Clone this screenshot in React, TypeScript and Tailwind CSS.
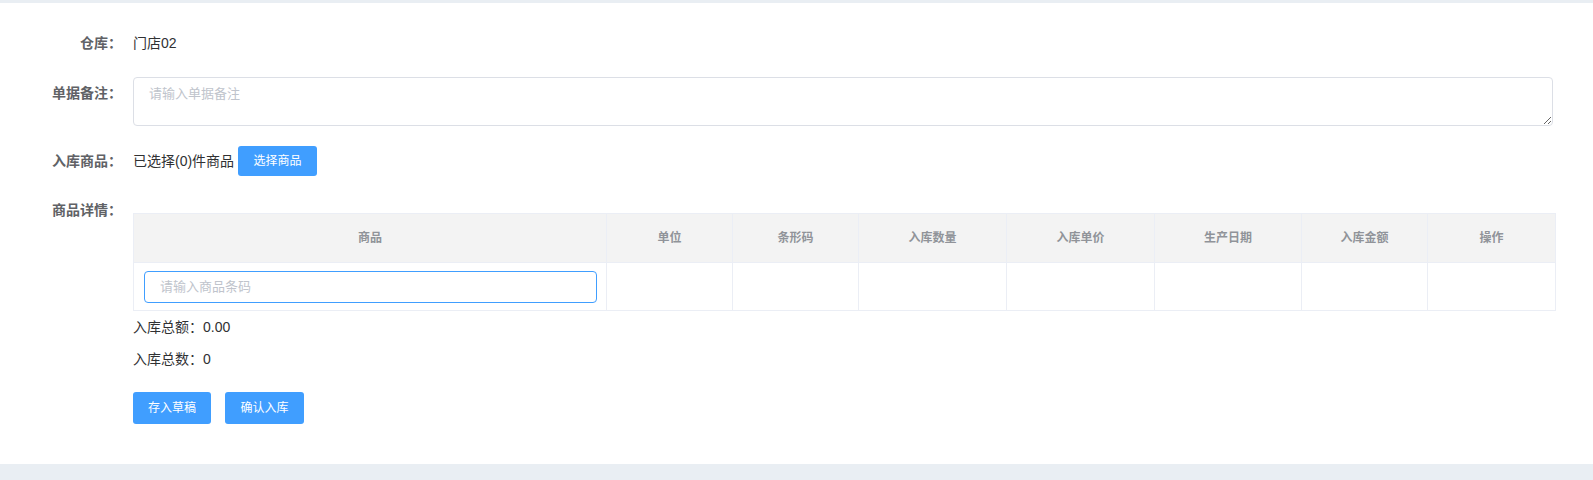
import React from 'react';

const columns = [
  { title: '商品', width: 'w-[473px]' },
  { title: '单位', width: 'w-[126px]' },
  { title: '条形码', width: 'w-[126px]' },
  { title: '入库数量', width: 'w-[148px]' },
  { title: '入库单价', width: 'w-[148px]' },
  { title: '生产日期', width: 'w-[147px]' },
  { title: '入库金额', width: 'w-[126px]' },
  { title: '操作', width: 'w-[128px]' },
];

function Label({ children, className = '' }: { children: React.ReactNode; className?: string }) {
  return (
    <div className={`w-[133px] shrink-0 pr-[11px] text-right text-[14px] font-bold text-[#606266] ${className}`}>
      {children}
    </div>
  );
}

export default function App() {
  return (
    <div
      className="flex h-[480px] w-full flex-col bg-[#e9eef3] pt-[3px]"
      style={{ fontFamily: '"Liberation Sans", "Noto Sans CJK SC", sans-serif' }}
    >
      <div className="h-[461px] bg-white pt-[20px] pr-[38px]">
        {/* 仓库 */}
        <div className="flex h-[40px] items-center">
          <Label>仓库：</Label>
          <span className="text-[14px] text-[#303133]">门店02</span>
        </div>

        {/* 单据备注 */}
        <div className="mt-[14px] flex items-start">
          <Label className="leading-[32px]">单据备注：</Label>
          <textarea
            placeholder="请输入单据备注"
            className="h-[49px] flex-1 mr-[2px] resize-y rounded-[4px] border border-[#dcdfe6] px-[15px] py-[5px] text-[13px] leading-[21px] text-[#606266] placeholder:text-[#c0c4cc] focus:outline-none"
          />
        </div>

        {/* 入库商品 */}
        <div className="mt-[20px] flex h-[30px] items-center">
          <Label>入库商品：</Label>
          <span className="text-[14px] text-[#303133]">已选择(0)件商品</span>
          <button className="ml-[4px] h-[30px] w-[79px] rounded-[3px] bg-[#409eff] text-[12px] text-white">
            选择商品
          </button>
        </div>

        {/* 商品详情 */}
        <div className="mt-[24px] flex items-start">
          <Label className="leading-[20px]">商品详情：</Label>
          <div className="flex-1">
            <table className="mt-[13px] w-full table-fixed border-collapse border border-[#ebeef5]">
              <thead>
                <tr className="h-[49px] bg-[#f3f3f3]">
                  {columns.map((c) => (
                    <th
                      key={c.title}
                      className={`${c.width} border border-[#ebeef5] text-center text-[12px] font-bold text-[#909399]`}
                    >
                      {c.title}
                    </th>
                  ))}
                </tr>
              </thead>
              <tbody>
                <tr className="h-[48px]">
                  <td className="border border-[#ebeef5] pl-[10px] pr-[9px]">
                    <input
                      placeholder="请输入商品条码"
                      className="h-[32px] w-full rounded-[4px] border border-[#409eff] px-[15px] text-[13px] text-[#606266] placeholder:text-[#c0c4cc] focus:outline-none"
                    />
                  </td>
                  {columns.slice(1).map((c) => (
                    <td key={c.title} className="border border-[#ebeef5]" />
                  ))}
                </tr>
              </tbody>
            </table>

            <div className="flex h-[32px] items-center text-[14px] text-[#303133]">入库总额：0.00</div>
            <div className="flex h-[32px] items-center text-[14px] text-[#303133]">入库总数：0</div>

            <div className="mt-[17px] flex gap-[14px]">
              <button className="h-[32px] w-[78px] rounded-[3px] bg-[#409eff] text-[12px] text-white">
                存入草稿
              </button>
              <button className="h-[32px] w-[79px] rounded-[3px] bg-[#409eff] text-[12px] text-white">
                确认入库
              </button>
            </div>
          </div>
        </div>
      </div>
    </div>
  );
}
